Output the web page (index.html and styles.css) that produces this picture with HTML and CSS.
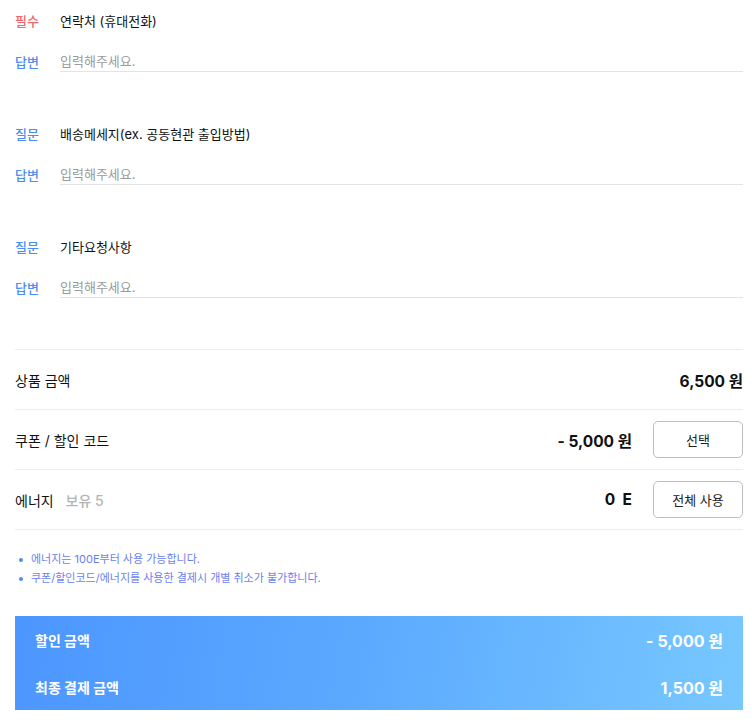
FILE: index.html
```html
<!DOCTYPE html>
<html lang="ko">
<head>
<meta charset="utf-8">
<link rel="stylesheet" href="styles.css">
</head>
<body>
<div class="page">
  <div class="qa">
    <div class="q-row"><span class="tag tag-req">필수</span><span class="q-text">연락처 (휴대전화)</span></div>
    <div class="a-row"><span class="tag tag-blue">답변</span><input class="answer" type="text" placeholder="입력해주세요."></div>
  </div>
  <div class="qa">
    <div class="q-row"><span class="tag tag-blue">질문</span><span class="q-text">배송메세지(ex. 공동현관 출입방법)</span></div>
    <div class="a-row"><span class="tag tag-blue">답변</span><input class="answer" type="text" placeholder="입력해주세요."></div>
  </div>
  <div class="qa">
    <div class="q-row"><span class="tag tag-blue">질문</span><span class="q-text">기타요청사항</span></div>
    <div class="a-row"><span class="tag tag-blue">답변</span><input class="answer" type="text" placeholder="입력해주세요."></div>
  </div>

  <div class="summary">
    <div class="s-row">
      <span class="s-label">상품 금액</span>
      <span class="s-amount">6,500 원</span>
    </div>
    <div class="s-row">
      <span class="s-label">쿠폰 / 할인 코드</span>
      <div class="s-right">
        <span class="s-amount">- 5,000 원</span>
        <button class="s-btn">선택</button>
      </div>
    </div>
    <div class="s-row">
      <span class="s-label">에너지 <span class="s-sub">보유 5</span></span>
      <div class="s-right">
        <span class="s-amount">0&nbsp; E</span>
        <button class="s-btn">전체 사용</button>
      </div>
    </div>
  </div>

  <ul class="notes">
    <li>에너지는 100E부터 사용 가능합니다.</li>
    <li>쿠폰/할인코드/에너지를 사용한 결제시 개별 취소가 불가합니다.</li>
  </ul>

  <div class="total">
    <div class="t-row"><span class="t-label">할인 금액</span><span class="t-amount">- 5,000 원</span></div>
    <div class="t-row"><span class="t-label">최종 결제 금액</span><span class="t-amount">1,500 원</span></div>
  </div>
</div>
</body>
</html>
```

FILE: styles.css
```css
* { box-sizing: border-box; }
html, body { margin: 0; padding: 0; background: #fff; }
body {
  font-family: Inter, "Noto Sans CJK KR", sans-serif;
  color: #111;
}
.page {
  padding: 10px 9px 0 15px;
}
.qa {
  margin-bottom: 51px;
}
.q-row, .a-row {
  display: flex;
  align-items: center;
}
.q-row {
  height: 20px;
  font-size: 13px;
}
.a-row {
  margin-top: 20px;
  height: 22px;
}
.tag {
  width: 45px;
  flex: none;
  font-size: 13px;
  font-weight: 500;
}
.tag-req { color: #f26468; }
.tag-blue { color: #4b8df2; }
.q-text { color: #111; font-weight: 400; }
.answer {
  flex: 1;
  height: 22px;
  border: none;
  border-bottom: 1px solid #e3e3e3;
  outline: none;
  padding: 0;
  font-family: inherit;
  font-size: 13px;
  color: #333;
  background: transparent;
}
.answer::placeholder { color: #9a9a9a; }

.summary {
  border-top: 1px solid #ececec;
}
.s-row {
  display: flex;
  align-items: center;
  justify-content: space-between;
  height: 60px;
  border-bottom: 1px solid #ececec;
}
.s-label {
  font-size: 14px;
  font-weight: 400;
  color: #111;
}
.s-sub {
  color: #b5b5b5;
  margin-left: 8px;
  font-weight: 500;
}
.s-right {
  display: flex;
  align-items: center;
  gap: 21px;
}
.s-amount {
  font-size: 15.5px;
  font-weight: 700;
  color: #111;
}
.s-btn {
  width: 90px;
  height: 37px;
  border: 1px solid #bdbdbd;
  border-radius: 5px;
  background: #fff;
  font-family: inherit;
  font-size: 13px;
  color: #222;
  padding: 0;
}

.notes {
  margin: 20px 0 0;
  padding: 0 0 0 16px;
  font-size: 11px;
  line-height: 19px;
  color: #6a7fef;
  list-style: none;
}
.notes li {
  position: relative;
}
.notes li::before {
  content: "";
  position: absolute;
  left: -12px;
  top: 8px;
  width: 4px;
  height: 4px;
  border-radius: 50%;
  background: #4b8df2;
}

.total {
  margin-top: 28px;
  height: 94px;
  padding: 0 20px;
  background: linear-gradient(100deg, #4c96ff 0%, #5aa8ff 45%, #77c8ff 100%);
  display: flex;
  flex-direction: column;
  justify-content: space-between;
  color: #fff;
}
.t-row {
  display: flex;
  justify-content: space-between;
  align-items: center;
  height: 47px;
}
.t-label { font-size: 14px; font-weight: 700; }
.t-amount { font-size: 16px; font-weight: 700; }
```
